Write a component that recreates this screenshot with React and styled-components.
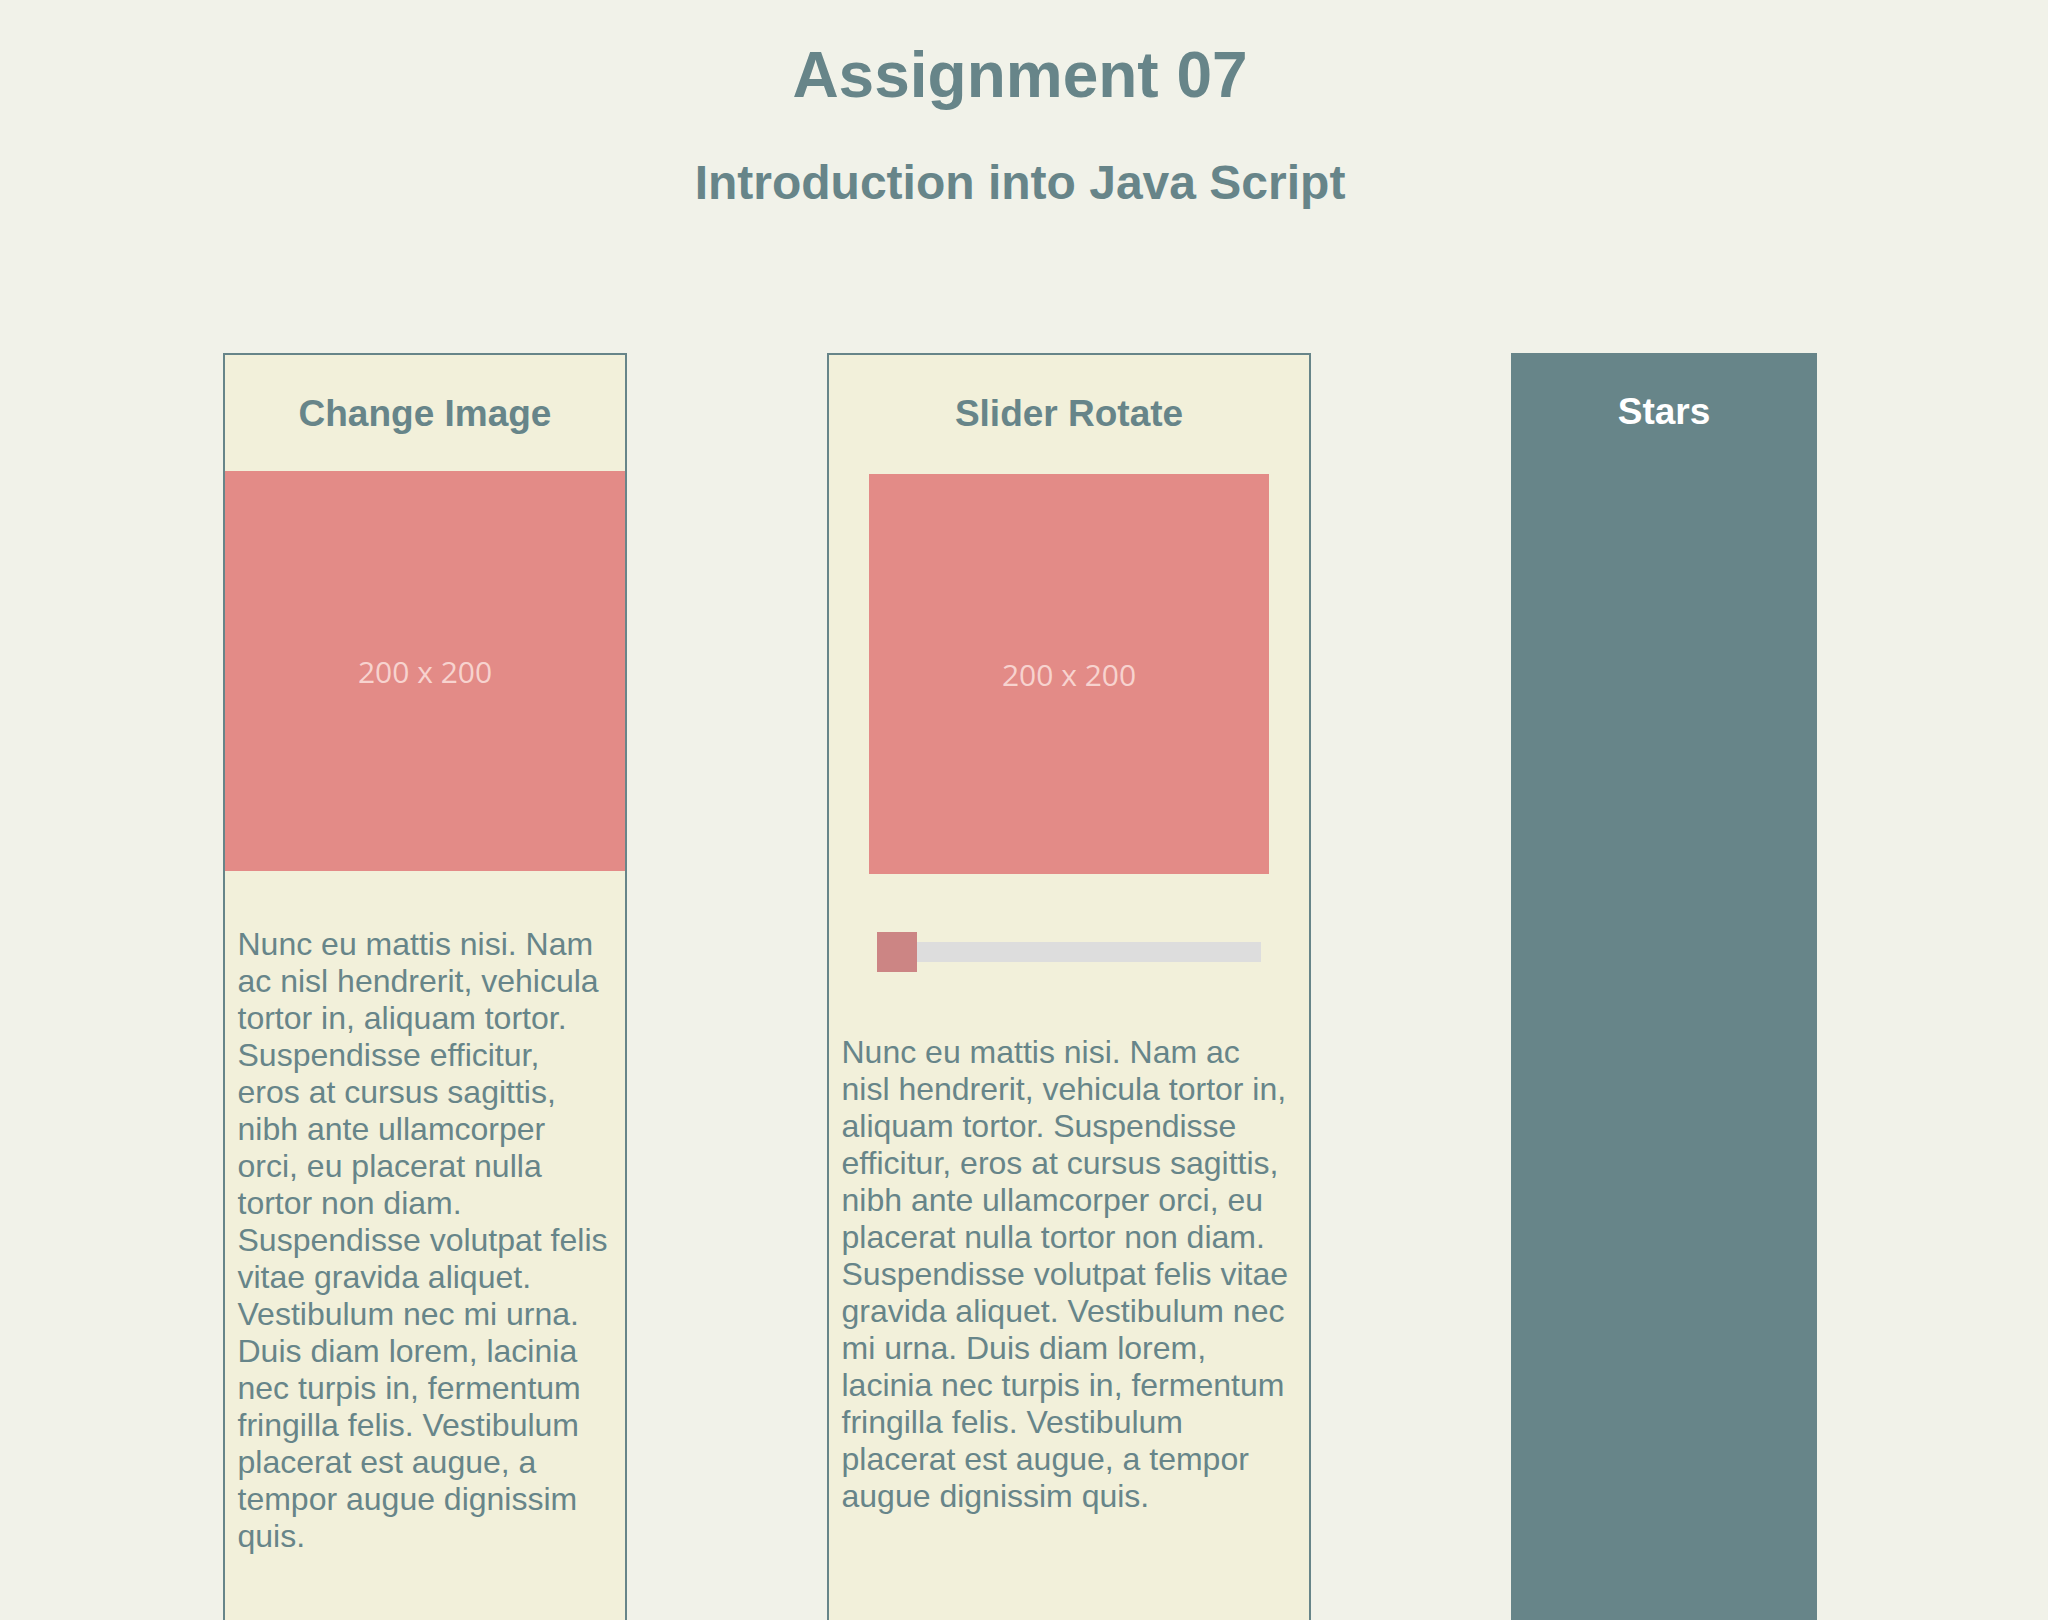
import React from "react";
import styled, { createGlobalStyle } from "styled-components";

const teal = "#678589";

const Global = createGlobalStyle`
  html, body {
    margin: 0;
    padding: 0;
    background: #f1f2e9;
    font-family: "Liberation Sans", Arial, Helvetica, sans-serif;
    color: ${teal};
  }
`;

const Page = styled.div`
  display: flex;
  flex-direction: column;
  align-items: center;
  padding-right: 8px;
`;

const Title = styled.h1`
  margin: 38px 0 0;
  font-size: 64px;
  font-weight: bold;
  line-height: normal;
  text-align: center;
`;

const Subtitle = styled.h2`
  margin: 43px 0 0;
  font-size: 48px;
  font-weight: bold;
  line-height: normal;
  text-align: center;
`;

const Row = styled.main`
  align-self: stretch;
  display: flex;
  justify-content: center;
  align-items: stretch;
  gap: 200px;
  margin-top: 143px;
`;

const Card = styled.section`
  box-sizing: border-box;
  width: ${(p) => p.$width}px;
  display: flex;
  flex-direction: column;
  align-items: center;
  padding-top: 38px;
  background: ${(p) => (p.$dark ? teal : "#f2f0da")};
  border: ${(p) => (p.$dark ? "none" : `2px solid ${teal}`)};
`;

const CardTitle = styled.h3`
  margin: 0;
  font-size: 37px;
  font-weight: bold;
  line-height: normal;
  color: ${(p) => (p.$light ? "#ffffff" : teal)};
`;

const Placeholder = styled.div`
  width: 400px;
  height: 400px;
  flex: none;
  margin-top: ${(p) => p.$top}px;
  background: #e38b87;
  display: flex;
  align-items: center;
  justify-content: center;
  font-family: "Open Sans", "DejaVu Sans", sans-serif;
  font-size: 30px;
  color: #f7d3cf;
`;

const Slider = styled.input`
  -webkit-appearance: none;
  appearance: none;
  width: 384px;
  height: 40px;
  margin: 58px 0 0;
  padding: 0;
  background: transparent;
  outline: none;

  &::-webkit-slider-runnable-track {
    height: 20px;
    background: #dddddd;
    border: none;
  }
  &::-webkit-slider-thumb {
    -webkit-appearance: none;
    appearance: none;
    width: 40px;
    height: 40px;
    margin-top: -10px;
    background: #cc8584;
    border: none;
    border-radius: 0;
  }
`;

const Text = styled.p`
  align-self: stretch;
  margin: ${(p) => p.$top}px 0 0;
  padding: 0 15px 130px 12.5px;
  font-size: 32px;
  line-height: normal;
`;

const lorem =
  "Nunc eu mattis nisi. Nam ac nisl hendrerit, vehicula tortor in, aliquam tortor. Suspendisse efficitur, eros at cursus sagittis, nibh ante ullamcorper orci, eu placerat nulla tortor non diam. Suspendisse volutpat felis vitae gravida aliquet. Vestibulum nec mi urna. Duis diam lorem, lacinia nec turpis in, fermentum fringilla felis. Vestibulum placerat est augue, a tempor augue dignissim quis.";

export default function App() {
  return (
    <Page>
      <Global />
      <Title>Assignment 07</Title>
      <Subtitle>Introduction into Java Script</Subtitle>
      <Row>
        <Card $width={404}>
          <CardTitle>Change Image</CardTitle>
          <Placeholder $top={36}>200 x 200</Placeholder>
          <Text $top={55}>{lorem}</Text>
        </Card>
        <Card $width={484}>
          <CardTitle>Slider Rotate</CardTitle>
          <Placeholder $top={39}>200 x 200</Placeholder>
          <Slider type="range" min="0" max="360" defaultValue="0" />
          <Text $top={62}>{lorem}</Text>
        </Card>
        <Card $width={306} $dark>
          <CardTitle $light>Stars</CardTitle>
        </Card>
      </Row>
    </Page>
  );
}
